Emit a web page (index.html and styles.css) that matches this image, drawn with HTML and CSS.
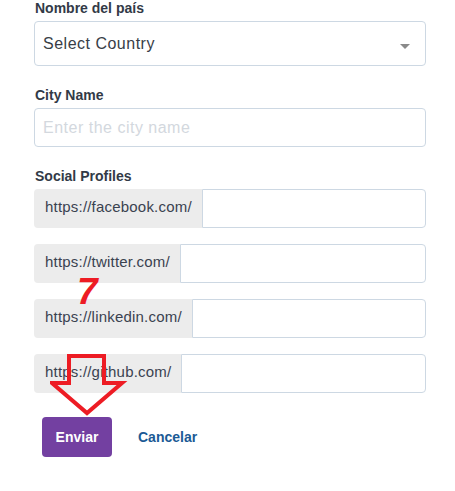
FILE: index.html
```html
<!DOCTYPE html>
<html lang="es">
<head>
<meta charset="utf-8">
<title>Form</title>
<link rel="stylesheet" href="styles.css">
</head>
<body>
<form class="form">
  <label class="label">Nombre del país</label>
  <div class="select" role="combobox" tabindex="0">
    <span class="select-text">Select Country</span>
    <span class="caret"></span>
  </div>

  <label class="label gap">City Name</label>
  <input class="input" type="text" placeholder="Enter the city name">

  <label class="label gap">Social Profiles</label>
  <div class="groups">
    <div class="group">
      <span class="addon">https://facebook.com/</span>
      <input class="group-input" type="text">
    </div>
    <div class="group">
      <span class="addon">https://twitter.com/</span>
      <input class="group-input" type="text">
    </div>
    <div class="group">
      <span class="addon">https://linkedin.com/</span>
      <input class="group-input" type="text">
    </div>
    <div class="group">
      <span class="addon">https://github.com/</span>
      <input class="group-input" type="text">
    </div>
  </div>

  <div class="actions">
    <button class="btn" type="button">Enviar</button>
    <a class="cancel" href="#">Cancelar</a>
  </div>

  <span class="note-num">7</span>
  <svg class="note-arrow" width="80" height="64" viewBox="0 0 80 64">
    <polygon points="19,2 54,2 54,29 72,29 37,59 2,29 19,29" fill="none" stroke="#ed1c24" stroke-width="4" stroke-linejoin="miter"/>
  </svg>
</form>
</body>
</html>
```

FILE: styles.css
```css
html, body {
  margin: 0;
  padding: 0;
  background: #ffffff;
}

body {
  font-family: "Liberation Sans", Arial, sans-serif;
  color: #333b47;
}

.form {
  position: relative;
  width: 392px;
  margin-left: 34px;
  display: flex;
  flex-direction: column;
}

.label {
  display: block;
  font-size: 14px;
  font-weight: bold;
  line-height: 16px;
  color: #323a47;
  margin: 0 0 5px 1px;
}

.label.gap {
  margin-top: 21px;
}

.select {
  display: flex;
  align-items: center;
  justify-content: space-between;
  height: 45px;
  box-sizing: border-box;
  border: 1px solid #cdd8e3;
  border-radius: 4px;
  background: #fff;
  padding: 0 15px 0 8px;
  font-size: 16px;
  letter-spacing: 0.5px;
  color: #383e47;
  outline: none;
}

.caret {
  width: 0;
  height: 0;
  margin-top: 5px;
  border-left: 5px solid transparent;
  border-right: 5px solid transparent;
  border-top: 5px solid #8a8a8a;
}

.input {
  width: 100%;
  height: 39px;
  box-sizing: border-box;
  border: 1px solid #cdd8e3;
  border-radius: 4px;
  padding: 0 8px;
  font-family: "Liberation Sans", Arial, sans-serif;
  font-size: 16px;
  letter-spacing: 0.5px;
  color: #383e47;
  outline: none;
}

.input::placeholder {
  color: #d3d8de;
}

.groups {
  display: flex;
  flex-direction: column;
  gap: 16px;
}

.group {
  display: flex;
  height: 39px;
}

.addon {
  display: flex;
  align-items: center;
  box-sizing: border-box;
  padding: 0 10px 4px 11px;
  background: #ececec;
  border-radius: 4px 0 0 4px;
  font-size: 15px;
  letter-spacing: 0.2px;
  color: #3a4250;
  white-space: nowrap;
}

.group-input {
  flex: 1;
  min-width: 0;
  box-sizing: border-box;
  height: 39px;
  border: 1px solid #cdd8e3;
  border-radius: 0 4px 4px 0;
  padding: 0 8px;
  font-size: 15px;
  outline: none;
  background: #fff;
}

.actions {
  display: flex;
  align-items: center;
  gap: 26px;
  margin-top: 24px;
  padding-left: 8px;
}

.btn {
  width: 70px;
  height: 40px;
  border: none;
  border-radius: 4px;
  background: #7340a1;
  color: #ffffff;
  font-family: "Liberation Sans", Arial, sans-serif;
  font-size: 14px;
  font-weight: bold;
  padding: 0;
}

.cancel {
  font-size: 14px;
  font-weight: bold;
  color: #1b5a95;
  text-decoration: none;
}

.note-num {
  position: absolute;
  left: 43px;
  top: 273px;
  font-family: "Liberation Sans", Arial, sans-serif;
  font-size: 37px;
  font-weight: bold;
  font-style: italic;
  line-height: 37px;
  color: #ed1c24;
}

.note-arrow {
  position: absolute;
  left: 16px;
  top: 354px;
}
```
